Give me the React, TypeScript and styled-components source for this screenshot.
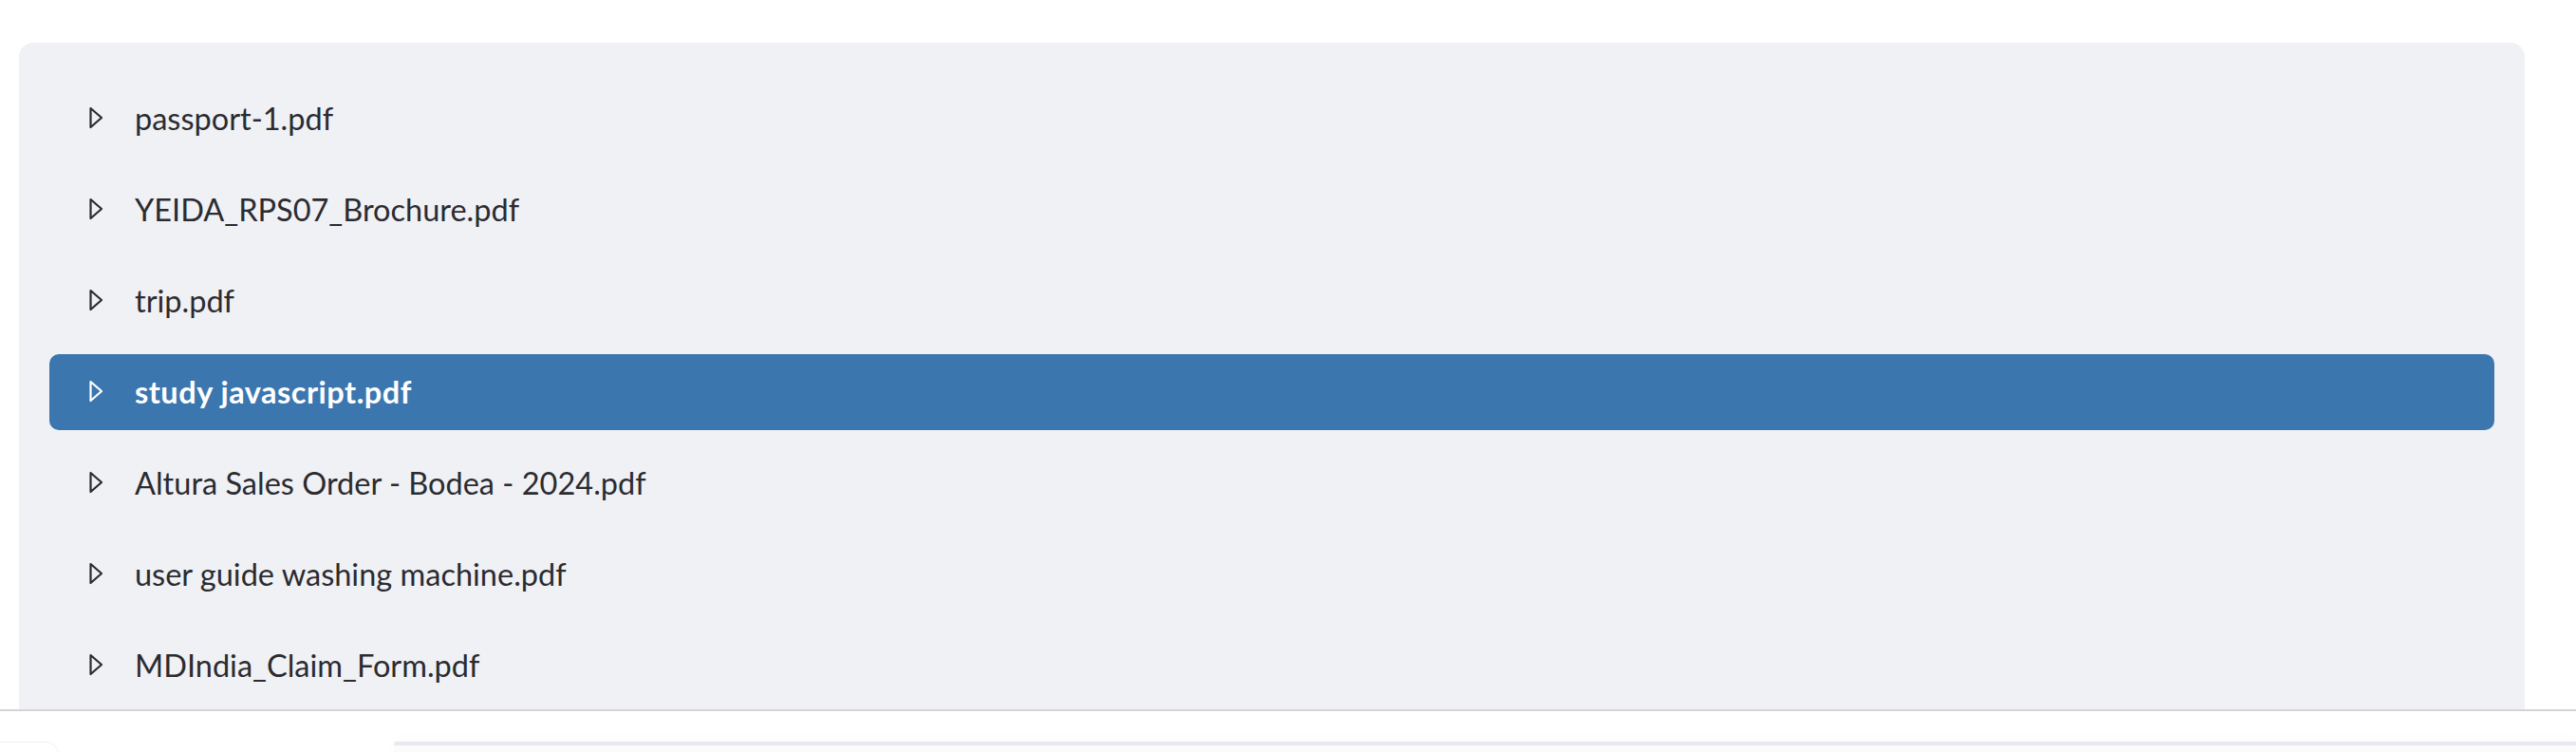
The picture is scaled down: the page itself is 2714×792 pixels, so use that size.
import React from "react";
import styled, { createGlobalStyle } from "styled-components";

const GlobalStyle = createGlobalStyle`
  html, body {
    margin: 0;
    padding: 0;
    background: #ffffff;
    font-family: Lato, "Open Sans", sans-serif;
  }
  * { box-sizing: border-box; }
`;

const Page = styled.div`
  width: 2714px;
  height: 792px;
  display: flex;
  flex-direction: column;
  overflow: hidden;
`;

const Main = styled.main`
  height: 747px;
  flex: none;
  overflow: hidden;
  padding: 45px 54px 0 20px;
`;

const Panel = styled.section`
  background: #f0f1f5;
  border-radius: 15px;
  padding: 40px 32px;
  display: flex;
  flex-direction: column;
  gap: 16px;
`;

const Row = styled.div<{ $active?: boolean }>`
  height: 80px;
  display: flex;
  align-items: center;
  gap: 33px;
  padding-left: 41px;
  border-radius: 10px;
  background: ${(p) => (p.$active ? "#3b76af" : "transparent")};
  color: ${(p) => (p.$active ? "#ffffff" : "#2b2b30")};
  font-size: 32.5px;
  font-weight: ${(p) => (p.$active ? 700 : 400)};
  letter-spacing: ${(p) => (p.$active ? "0.5px" : "0")};
`;

const Caret = styled.svg`
  width: 16px;
  height: 24px;
  flex: none;
  margin-top: -2px;
`;

const Name = styled.span`
  white-space: nowrap;
  line-height: 1;
`;

const Footer = styled.footer`
  flex: 1;
  border-top: 2px solid #d4d4d8;
  display: flex;
  align-items: flex-start;
  padding-top: 32px;
`;

const CornerBox = styled.div`
  width: 62px;
  height: 30px;
  border: 1px solid #f2f2f4;
  border-left: none;
  border-radius: 0 14px 0 0;
  background: #ffffff;
  flex: none;
`;

const InputBar = styled.div`
  margin-left: 353px;
  flex: 1;
  height: 20px;
  border-top: 4px solid #e8e8ee;
  border-radius: 3px 0 0 0;
  box-shadow: 0 -4px 10px rgba(0, 0, 0, 0.02);
  background: #fbfbfc;
`;

const files = [
  "passport-1.pdf",
  "YEIDA_RPS07_Brochure.pdf",
  "trip.pdf",
  "study javascript.pdf",
  "Altura Sales Order - Bodea - 2024.pdf",
  "user guide washing machine.pdf",
  "MDIndia_Claim_Form.pdf",
];

const ActiveIndex = 3;

export default function App() {
  return (
    <>
      <GlobalStyle />
      <Page>
        <Main>
          <Panel>
            {files.map((f, i) => (
              <Row key={f} $active={i === ActiveIndex}>
                <Caret viewBox="0 0 16 24" fill="none">
                  <path
                    d="M2.5 2 L14 12 L2.5 22 Z"
                    stroke="currentColor"
                    strokeWidth="2.2"
                    strokeLinejoin="round"
                  />
                </Caret>
                <Name>{f}</Name>
              </Row>
            ))}
          </Panel>
        </Main>
        <Footer>
          <CornerBox />
          <InputBar />
        </Footer>
      </Page>
    </>
  );
}
